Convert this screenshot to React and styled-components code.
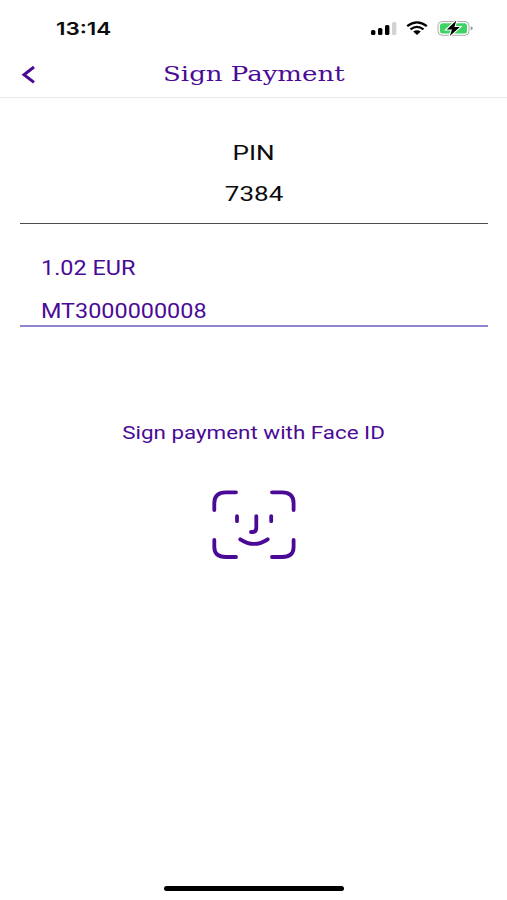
import React from "react";
import styled, { createGlobalStyle } from "styled-components";

const purple = "#4b0a96";

const GlobalStyle = createGlobalStyle`
  * { box-sizing: border-box; }
  body { margin: 0; background: #fff; }
`;

const Screen = styled.div`
  display: flex;
  flex-direction: column;
  width: 507px;
  height: 900px;
  overflow: hidden;
  background: #fff;
  color: #0c0c0c;
  font-family: Roboto, "Liberation Sans", sans-serif;
`;

const Wide = styled.span`
  display: inline-block;
  white-space: nowrap;
  transform: scaleX(${(p) => p.$scale});
  transform-origin: ${(p) => p.$origin || "center"} center;
`;

const StatusBar = styled.header`
  display: flex;
  justify-content: space-between;
  height: 50px;
  padding: 18px 33px 0 56px;
`;

const Clock = styled.time`
  font: 600 17.5px/22px Inter, sans-serif;
`;

const StatusIcons = styled.svg`
  display: block;
  width: 104px;
  height: 20px;
`;

const NavBar = styled.nav`
  display: grid;
  grid-template-columns: 60px 1fr 60px;
  height: 48px;
  border-bottom: 1px solid #e9e9e9;
`;

const BackButton = styled.button`
  display: flex;
  align-items: flex-start;
  padding: 15px 0 0 21px;
  border: 0;
  background: none;
`;

const Title = styled.h1`
  margin: 0;
  padding-top: 12px;
  color: ${purple};
  text-align: center;
  font: 400 20px/24px "DejaVu Serif", serif;
`;

const PinField = styled.section`
  margin: 0 19px 0 20px;
  height: 126px;
  padding-top: 35px;
  border-bottom: 1px solid #4c4c4c;
  text-align: center;
  font-size: 20.5px;
  line-height: 41px;
`;

const Line = styled.div`
  height: ${(p) => p.$height || 41}px;
`;

const PaymentDetails = styled.section`
  margin: 0 19px 0 20px;
  height: 103px;
  padding: 23px 0 0 21px;
  border-bottom: 2px solid #9384d0;
  color: ${purple};
  font-size: 19.5px;
  line-height: 43px;
`;

const FaceIdButton = styled.button`
  display: flex;
  flex-direction: column;
  align-items: center;
  margin-top: 94px;
  padding: 0;
  border: 0;
  background: none;
  color: ${purple};
  font: 400 18.5px/24px Roboto, sans-serif;
`;

const FaceIcon = styled.svg`
  display: block;
  width: 86px;
  height: 72px;
  margin-top: 44px;
`;

const HomeIndicator = styled.div`
  width: 180px;
  height: 5px;
  margin: auto auto 9px 164px;
  border-radius: 3px;
  background: #000;
`;

export default function App() {
  return (
    <>
      <GlobalStyle />
      <Screen>
        <StatusBar>
          <Clock><Wide $scale={1.28} $origin="left">13:14</Wide></Clock>
          <StatusIcons viewBox="370 18 104 20">
            <rect x="371" y="30" width="4.4" height="5" rx="1.5" />
            <rect x="378" y="28" width="4.4" height="7" rx="1.5" />
            <rect x="385" y="25" width="4.4" height="10" rx="1.5" />
            <rect x="392" y="22" width="4.4" height="13" rx="1.5" fill="#d3d3d3" />
            <g fill="none" stroke="#000" strokeWidth="2.3">
              <path d="M407.2 26.2Q417 18.5 426.8 26.2" />
              <path d="M410.5 29.4Q417 24.3 423.5 29.4" />
            </g>
            <path d="M413.2 31.5Q417 29 420.8 31.5L417 35Z" />
            <rect x="438" y="21.5" width="31" height="13.8" rx="4" fill="#fff" stroke="#adadad" />
            <rect x="440" y="23.3" width="27" height="10.2" rx="2.5" fill="#3fd365" />
            <path d="M470.7 26.3q2 .4 2 2t-2 2Z" fill="#999" />
            <path d="M456.3 20.5L446.8 29.5H452L449.8 36L459.8 27H454.4Z" stroke="#fff" strokeWidth="2.2" paintOrder="stroke" />
          </StatusIcons>
        </StatusBar>
        <NavBar>
          <BackButton aria-label="Back">
            <svg width="15" height="20" viewBox="0 0 15 20" fill="none" stroke={purple} strokeWidth="3">
              <path d="M13 2L3 9.7L13 17.4" />
            </svg>
          </BackButton>
          <Title><Wide $scale={1.3}>Sign Payment</Wide></Title>
          <span />
        </NavBar>
        <PinField>
          <Line><Wide $scale={1.27}>PIN</Wide></Line>
          <Line><Wide $scale={1.27}>7384</Wide></Line>
        </PinField>
        <PaymentDetails>
          <Line $height={43}><Wide $scale={1.2} $origin="left">1.02 EUR</Wide></Line>
          <Line $height={43}><Wide $scale={1.2} $origin="left">MT3000000008</Wide></Line>
        </PaymentDetails>
        <FaceIdButton>
          <Wide $scale={1.21}>Sign payment with Face ID</Wide>
          <FaceIcon viewBox="211 489 86 72" fill="none" stroke={purple} strokeWidth="3.8" strokeLinecap="round">
            <path d="M214.3 510V503Q214.3 492.3 226 492.3H236" />
            <path d="M272 492.3H282Q293.6 492.3 293.6 503V510" />
            <path d="M214.3 540V547Q214.3 557 226 557H236" />
            <path d="M272 557H282Q293.6 557 293.6 547V540" />
            <path d="M237 516.2V521.2M271.2 516.2V521.2" />
            <path d="M256.3 516.2V528Q256.3 532 252.5 532H251" />
            <path d="M240.3 539.3Q254 548.5 267.7 539.3" />
          </FaceIcon>
        </FaceIdButton>
        <HomeIndicator />
      </Screen>
    </>
  );
}
